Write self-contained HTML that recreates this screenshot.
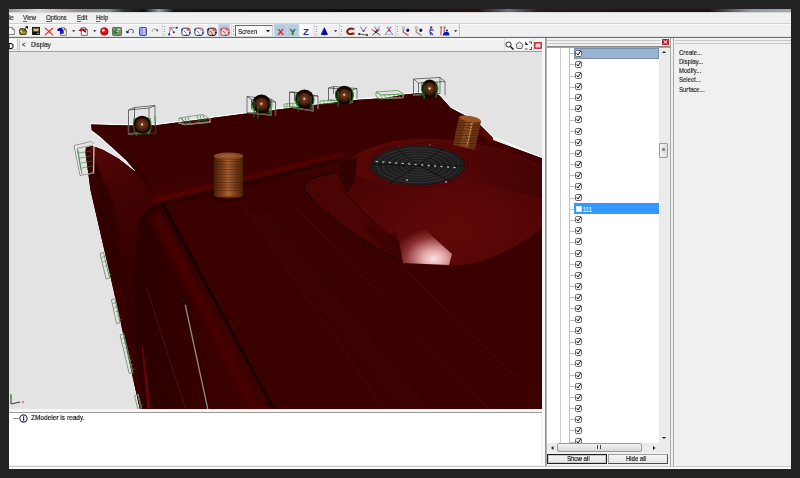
<!DOCTYPE html>
<html><head><meta charset="utf-8">
<style>
*{margin:0;padding:0;box-sizing:border-box}
html,body{width:800px;height:478px;overflow:hidden;background:#232323;font-family:"Liberation Sans",sans-serif;position:relative}
.a{position:absolute;display:block}
u{text-decoration-color:#666}
.t{position:absolute;font-size:8px;color:#2a2a2a;white-space:nowrap;line-height:8px;transform:scaleX(0.75);transform-origin:0 0;will-change:transform;-webkit-text-stroke:0.2px currentColor}
</style></head><body>
<div class="a" style="left:9px;top:9px;width:782px;height:460px;background:#f0f0f0"></div>
<div class="a" style="left:9px;top:9px;width:782px;height:3px;background:linear-gradient(90deg,#9a9a9a 0,#d8d8d8 30px,#b0a0a0 55px,#8a8a8a 75px,#7a9090 100px,#303030 115px,#101010 135px,#8aa0b0 150px,#151515 165px,#0d0d0d 380px,#2a1010 470px,#6a7080 500px,#2a1a1a 530px,#1e1010 700px,#8a9aa0 740px,#a0a8b0 782px)"></div>
<div class="a" style="left:9px;top:12px;width:782px;height:1px;background:#d8d8d8"></div>
<div class="t" style="left:9px;top:13.8px;">le</div>
<div class="t" style="left:23px;top:13.8px;"><u>V</u>iew</div>
<div class="t" style="left:46px;top:13.8px;"><u>O</u>ptions</div>
<div class="t" style="left:76.5px;top:13.8px;"><u>E</u>dit</div>
<div class="t" style="left:96px;top:13.8px;"><u>H</u>elp</div>
<div class="a" style="left:9px;top:23px;width:782px;height:1px;background:#d0d0d0"></div>
<div class="a" style="left:9px;top:24px;width:782px;height:1px;background:#fafafa"></div>
<div class="a" style="left:459px;top:24px;width:1px;height:13px;background:#c4c4c4"></div>
<div class="a" style="left:9px;top:36px;width:782px;height:1px;background:#e0e0e0"></div>
<div class="a" style="left:9px;top:37px;width:782px;height:1px;background:#6e6e6e"></div>
<svg class="a" style="left:9px;top:27px;" width="6" height="8" viewBox="0 0 6 8"><path d="M0,0.5 H3.2 L5.3,2.6 V7.5 H0" fill="#fff" stroke="#6a6a6a" stroke-width="0.9"/><path d="M3.2,0.5 V2.6 H5.3" fill="none" stroke="#6a6a6a" stroke-width="0.7"/></svg>
<svg class="a" style="left:19px;top:26px;" width="9" height="9" viewBox="0 0 9 9"><path d="M0.6,3.5 L1.6,2.6 H4.2 L5,3.4 H6.8 V8.3 H1 Z" fill="#8a8a18" stroke="#2a2a08" stroke-width="0.9"/><path d="M1.2,5 H7.8 L6.8,8.3 H1.2z" fill="#a8a828" stroke="#2a2a08" stroke-width="0.7"/><circle cx="2.3" cy="5.3" r="1.1" fill="#e8e890"/><path d="M5.2,3 L8.2,1 M8.6,0.6 L8.6,2.4 L6.8,0.8z" stroke="#111" stroke-width="0.9" fill="#111"/></svg>
<svg class="a" style="left:32px;top:26.5px;" width="8" height="8.5" viewBox="0 0 8 8.5"><rect x="0.4" y="0.4" width="7.2" height="7.7" fill="#151510" stroke="#101008" stroke-width="0.8"/><rect x="1.4" y="1" width="5.2" height="3.4" fill="#c8c878"/><rect x="1.4" y="1" width="5.2" height="1" fill="#6a6a30"/><rect x="5.3" y="5.8" width="1.3" height="1.3" fill="#e0e0d0"/></svg>
<svg class="a" style="left:44px;top:26.5px;" width="10" height="9" viewBox="0 0 10 9"><path d="M1,0.8 L9,8.2 M9,0.8 L1,8.2" stroke="#d42020" stroke-width="1.1"/></svg>
<svg class="a" style="left:57px;top:26.5px;" width="10" height="9" viewBox="0 0 10 9"><path d="M3.5,0.8 H7.3 L9.3,2.8 V8.3 H3.5z" fill="#fff" stroke="#5a5a5a" stroke-width="0.8"/><path d="M7.3,0.8 V2.8 H9.3" fill="none" stroke="#333" stroke-width="0.8"/><path d="M0.3,2.2 L2,1 H4.5 L6.5,3 V6.6 H3.3 V4 H0.6z" fill="#0a0ab8"/><rect x="3.3" y="4" width="3.2" height="2.6" fill="#1a1ae0"/></svg>
<svg class="a" style="left:71.5px;top:30px;" width="4" height="3" viewBox="0 0 4 3"><path d="M0.2,0.2 h3 l-1.5,1.8z" fill="#111"/></svg>
<svg class="a" style="left:93px;top:30px;" width="4" height="3" viewBox="0 0 4 3"><path d="M0.2,0.2 h3 l-1.5,1.8z" fill="#111"/></svg>
<svg class="a" style="left:78px;top:26.5px;" width="10" height="9" viewBox="0 0 10 9"><path d="M3.3,0.8 H7.3 L9.3,2.8 V8.3 H3.3z" fill="#fff" stroke="#4a4a4a" stroke-width="0.8"/><path d="M7.3,0.8 V2.8 H9.3" fill="none" stroke="#222" stroke-width="0.8"/><path d="M0.3,3.4 L3,1.2 L5.5,1.8 L7.5,3.2 L6.5,4.6 L4.8,3.4 L2.8,4.4 Z" fill="#d01010"/><path d="M5,2.6 L7.8,5.2" stroke="#500000" stroke-width="1.3"/></svg>
<svg class="a" style="left:100px;top:26.5px;" width="9" height="9" viewBox="0 0 9 9"><circle cx="4.3" cy="4.4" r="4" fill="#d01818"/><circle cx="4.3" cy="4.4" r="3.6" fill="none" stroke="#a00808" stroke-width="0.6"/><circle cx="3.4" cy="3.2" r="1.5" fill="#f8b0b0"/></svg>
<svg class="a" style="left:112px;top:26.5px;" width="10" height="9" viewBox="0 0 10 9"><rect x="0.5" y="0.5" width="9" height="8" rx="0.8" fill="#8a9078" stroke="#5a5a50" stroke-width="0.9"/><path d="M1.5,4.5 L4,1.8 L6,3 L5,6.5 L2.2,6.8z" fill="#108a10"/><rect x="5.5" y="1.6" width="2.6" height="1.4" fill="#a8d8e0"/><rect x="4.2" y="3.6" width="2.2" height="1.2" fill="#c0e0e8"/><rect x="5.5" y="6.2" width="3" height="1.2" fill="#8a8050"/></svg>
<svg class="a" style="left:126px;top:28px;" width="8" height="6" viewBox="0 0 8 6"><path d="M2,3.8 C2.5,0.8 6,0.4 7.2,2.6 C7.6,3.6 7.2,4.8 6.6,5.4" fill="none" stroke="#6a6a80" stroke-width="1.1"/><path d="M0.2,2.6 L3.4,4.2 L0.6,5.4z" fill="#10104a"/></svg>
<svg class="a" style="left:139px;top:26.5px;" width="8" height="9" viewBox="0 0 8 9"><rect x="0.5" y="0.5" width="7" height="8" rx="1" fill="#9a9af0" stroke="#404070" stroke-width="0.9"/><path d="M4.2,1.8 h1.6 M4.2,4 h1.6 M4.2,6.3 h1.6" stroke="#fff" stroke-width="1"/></svg>
<svg class="a" style="left:151px;top:28px;" width="8" height="6" viewBox="0 0 8 6"><path d="M1.2,3.8 C0.8,1.2 4,0.2 5.6,2" fill="none" stroke="#8a8a8a" stroke-width="0.9"/><path d="M5,1.2 L7.6,1.8 L6,4.2z" fill="#5a5a5a"/></svg>
<div class="a" style="left:162px;top:24px;width:1px;height:13px;background:#dadada"></div>
<div class="a" style="left:164px;top:26px;width:1px;height:9px;background:repeating-linear-gradient(#9a9a9a 0 1px,transparent 1px 2.7px)"></div>
<div class="a" style="left:231px;top:24px;width:1px;height:13px;background:#dadada"></div>
<div class="a" style="left:233px;top:26px;width:1px;height:9px;background:repeating-linear-gradient(#9a9a9a 0 1px,transparent 1px 2.7px)"></div>
<div class="a" style="left:314px;top:24px;width:1px;height:13px;background:#dadada"></div>
<div class="a" style="left:316px;top:26px;width:1px;height:9px;background:repeating-linear-gradient(#9a9a9a 0 1px,transparent 1px 2.7px)"></div>
<div class="a" style="left:339px;top:24px;width:1px;height:13px;background:#dadada"></div>
<div class="a" style="left:341px;top:26px;width:1px;height:9px;background:repeating-linear-gradient(#9a9a9a 0 1px,transparent 1px 2.7px)"></div>
<div class="a" style="left:395px;top:24px;width:1px;height:13px;background:#dadada"></div>
<div class="a" style="left:397px;top:26px;width:1px;height:9px;background:repeating-linear-gradient(#9a9a9a 0 1px,transparent 1px 2.7px)"></div>
<svg class="a" style="left:168px;top:26px;" width="10" height="10" viewBox="0 0 10 10"><path d="M2.5,1.8 L9,1.8 M2.5,1.8 L1.2,8.2 M2.5,1.8 L5.8,6" stroke="#5a6ab0" stroke-width="0.7" fill="none"/><path d="M2.5,2 L1.4,8" stroke="#a0a8c8" stroke-width="0.9"/><circle cx="2.6" cy="2" r="1.6" fill="#e88080"/><circle cx="8.8" cy="1.8" r="1" fill="#1a28a0"/><circle cx="1.2" cy="8.4" r="1.1" fill="#1a28a0"/><circle cx="5.8" cy="6.2" r="1" fill="#6a1010"/></svg>
<svg class="a" style="left:181px;top:26.5px;" width="10" height="9" viewBox="0 0 10 9"><rect x="0.8" y="1.2" width="8.2" height="7.2" rx="2" fill="#f8f8f8" stroke="#3a3a70" stroke-width="1"/><path d="M2.8,3.8 L5.4,6.2" stroke="#333" stroke-width="0.7"/><circle cx="7" cy="2.6" r="1.4" fill="#e05050"/><circle cx="1.2" cy="2.6" r="0.9" fill="#2030b0"/><circle cx="8.8" cy="5.8" r="0.9" fill="#2030b0"/><circle cx="5.6" cy="8.4" r="0.9" fill="#2030b0"/></svg>
<svg class="a" style="left:194px;top:26.5px;" width="10" height="9" viewBox="0 0 10 9"><rect x="0.8" y="1.2" width="8.2" height="7.2" rx="2" fill="#f8f8f8" stroke="#3a3a70" stroke-width="1"/><path d="M2.8,3.8 L5.4,6.2" stroke="#333" stroke-width="0.7"/><circle cx="7" cy="2.6" r="1.4" fill="#f0a0a0"/><circle cx="1.2" cy="2.6" r="0.9" fill="#2030b0"/><circle cx="8.8" cy="5.8" r="0.9" fill="#2030b0"/><circle cx="5.6" cy="8.4" r="0.9" fill="#2030b0"/></svg>
<div class="a" style="left:218px;top:24px;width:12px;height:13px;background:#b4cade;border:1px solid #c8d8e8"></div>
<svg class="a" style="left:207px;top:26.5px;" width="10" height="9" viewBox="0 0 10 9"><rect x="0.8" y="1.2" width="8.2" height="7.2" rx="2" fill="#f0c8c8" stroke="#202020" stroke-width="1"/><path d="M2.8,3.8 L5.4,6.2" stroke="#333" stroke-width="0.7"/><circle cx="7" cy="2.6" r="1.4" fill="#d05050"/><circle cx="1.2" cy="2.6" r="0.9" fill="#101010"/><circle cx="8.8" cy="5.8" r="0.9" fill="#101010"/><circle cx="5.6" cy="8.4" r="0.9" fill="#101010"/></svg>
<svg class="a" style="left:220px;top:26.5px;" width="10" height="9" viewBox="0 0 10 9"><rect x="0.8" y="1.2" width="8.2" height="7.2" rx="2" fill="#f4d0d0" stroke="#c05050" stroke-width="1"/><path d="M2.8,3.8 L5.4,6.2" stroke="#333" stroke-width="0.7"/><circle cx="7" cy="2.6" r="1.4" fill="#e07070"/><circle cx="1.2" cy="2.6" r="0.9" fill="#a03030"/><circle cx="8.8" cy="5.8" r="0.9" fill="#a03030"/><circle cx="5.6" cy="8.4" r="0.9" fill="#a03030"/></svg>
<div class="a" style="left:235px;top:25px;width:38px;height:12px;background:#fff;border:1px solid #6a6a6a;border-right-color:#d0d0d0;border-bottom-color:#d0d0d0"></div>
<div class="t" style="left:238px;top:27.5px;color:#1a1a1a">Screen</div>
<div class="a" style="left:264px;top:26px;width:8px;height:10px;background:#f4f4f4"></div>
<svg class="a" style="left:266px;top:30px;" width="5" height="3" viewBox="0 0 5 3"><path d="M0,0 h4 l-2,2.2z" fill="#111"/></svg>
<div class="a" style="left:274px;top:24px;width:13px;height:13px;background:#b4cade;border:1px solid #c0d2e4"></div>
<div class="a" style="left:287px;top:24px;width:12px;height:13px;background:#b4cade;border:1px solid #c0d2e4"></div>
<div class="a" style="left:300px;top:24px;width:12px;height:13px;background:#fafafa"></div>
<div class="a" style="left:277.5px;top:25.5px;font:bold 9.5px 'Liberation Sans',sans-serif;color:#d02020;line-height:11px">X</div>
<div class="a" style="left:289.5px;top:25.5px;font:bold 9.5px 'Liberation Sans',sans-serif;color:#107010;line-height:11px">Y</div>
<div class="a" style="left:303px;top:25.5px;font:bold 9.5px 'Liberation Sans',sans-serif;color:#2030c0;line-height:11px">Z</div>
<svg class="a" style="left:320px;top:26.5px;" width="9" height="9" viewBox="0 0 9 9"><path d="M4.5,0.3 L8,7.6 Q4.5,8.8 0.8,7.6z" fill="#0c0c90"/><path d="M4.3,0.8 L1.2,7.4" stroke="#3a50e0" stroke-width="1"/></svg>
<svg class="a" style="left:333.5px;top:30px;" width="4" height="3" viewBox="0 0 4 3"><path d="M0.2,0.2 h3 l-1.5,1.8z" fill="#111"/></svg>
<svg class="a" style="left:346px;top:26.5px;" width="9" height="9" viewBox="0 0 9 9"><path d="M8,2.4 C4.5,0.6 1,2.2 1.2,4.8 C1.4,7.2 4.5,7.6 8,6.2" fill="none" stroke="#901010" stroke-width="2"/><path d="M6.4,1.6 l2,0.6 M6.6,6.6 l2,-0.4" stroke="#606060" stroke-width="1.6"/></svg>
<svg class="a" style="left:358px;top:26px;" width="10" height="10" viewBox="0 0 10 10"><path d="M2.5,0.6 L5.5,5.6 L8.5,0.6" fill="none" stroke="#4a58c0" stroke-width="0.8"/><path d="M1,8 L9,9" stroke="#303030" stroke-width="0.8"/><circle cx="5.5" cy="5" r="1.1" fill="#c02040"/><circle cx="1.2" cy="8" r="1.1" fill="#4a1808"/><circle cx="9" cy="9" r="1" fill="#4a1808"/></svg>
<svg class="a" style="left:371px;top:26px;" width="10" height="10" viewBox="0 0 10 10"><path d="M3.5,0.6 L6,4.8 L8.5,0.6" fill="none" stroke="#4a58c0" stroke-width="0.8"/><path d="M0.6,3.4 L9.4,9.2 M1.2,9.2 L9,3.6" stroke="#303040" stroke-width="0.8"/><circle cx="6" cy="4.4" r="1.1" fill="#c02040"/><circle cx="4.8" cy="6" r="1" fill="#201010"/></svg>
<svg class="a" style="left:384px;top:26px;" width="10" height="10" viewBox="0 0 10 10"><path d="M2,2 h6 M2,8.6 h6" stroke="#b0b0b0" stroke-width="0.7"/><path d="M7,0.6 L1,9 M3,0.6 L9,9" stroke="#5a68c8" stroke-width="0.9"/><circle cx="5.2" cy="4.4" r="1.2" fill="#d03050"/></svg>
<svg class="a" style="left:401px;top:26px;" width="9" height="10" viewBox="0 0 9 10"><circle cx="2.5" cy="1.8" r="1.3" fill="none" stroke="#909090" stroke-width="0.7"/><path d="M2.6,3.2 L2.2,6 L6,8.6 L7.6,9" stroke="#c06a6a" stroke-width="1.5" fill="none"/><ellipse cx="6.8" cy="4.2" rx="1.5" ry="1.8" fill="#141a60"/><path d="M6.8,1.6 v1" stroke="#9aa0c0" stroke-width="0.8"/></svg>
<svg class="a" style="left:414px;top:26px;" width="9" height="10" viewBox="0 0 9 10"><circle cx="2.5" cy="1.8" r="1.3" fill="none" stroke="#c07a7a" stroke-width="0.7"/><path d="M2.6,3.2 L2.2,6 L6,8.6 L7.6,9" stroke="#9a9a9a" stroke-width="1.5" fill="none"/><ellipse cx="6.8" cy="4.2" rx="1.5" ry="1.8" fill="#141a60"/></svg>
<svg class="a" style="left:428px;top:26px;" width="8" height="10" viewBox="0 0 8 10"><circle cx="3.2" cy="1.4" r="1.1" fill="#2a30a0"/><path d="M3,2.4 L1.8,5.6 L2.8,9.4 M1.4,3.8 L5,4.2 M2.6,6.2 L5,9" stroke="#3a40c8" stroke-width="1.2" fill="none"/><path d="M4.8,2.6 L6,4.6" stroke="#c06060" stroke-width="0.9"/></svg>
<svg class="a" style="left:439px;top:26px;" width="11" height="10" viewBox="0 0 11 10"><circle cx="2.2" cy="1.6" r="1.3" fill="#c87878"/><circle cx="5.6" cy="1.6" r="1.3" fill="#c87878"/><path d="M2.2,2.8 L1.8,9.4 M5.6,2.8 L5.2,6" stroke="#c87878" stroke-width="1.5"/><path d="M3.6,9.6 Q4,5.6 7.6,5.8 Q10.6,6 10.4,9.6z" fill="#0c18b0"/><circle cx="8" cy="4.4" r="1" fill="#0c18b0"/></svg>
<svg class="a" style="left:454px;top:30px;" width="4" height="3" viewBox="0 0 4 3"><path d="M0.2,0.2 h3 l-1.5,1.8z" fill="#111"/></svg>
<div class="a" style="left:9px;top:38px;width:533px;height:14px;background:#f0f0f0"></div>
<div class="a" style="left:9px;top:39px;width:9px;height:11px;background:#fafafa;border-right:1px solid #c4c4c4;border-bottom:1px solid #d0d0d0"></div>
<div class="a" style="left:19px;top:39px;width:523px;height:12px;background:#f0f0f0;border-left:1px solid #c8c8c8;border-top:1px solid #fafafa"></div>
<div class="a" style="left:9px;top:39px;width:8px;height:11px;overflow:hidden"><div class="a" style="left:-1.5px;top:2.5px;font:bold 8.5px 'Liberation Sans',sans-serif;color:#101010;line-height:9px;will-change:transform;transform:scaleX(0.95);transform-origin:0 0">D</div></div>
<div class="t" style="left:22px;top:40.8px;">&lt;</div>
<div class="t" style="left:30.8px;top:40.8px;">Display</div>
<div class="a" style="left:504px;top:39px;width:29px;height:11px;background:#f8f8f8;border-left:1px solid #d8d8d8"></div>
<div class="a" style="left:533px;top:39px;width:9px;height:12px;background:#f4f4f4;border-left:1px solid #d8d8d8"></div>
<svg class="a" style="left:505px;top:41px;" width="9" height="9" viewBox="0 0 9 9"><circle cx="3.5" cy="3.5" r="2.6" fill="none" stroke="#222" stroke-width="1"/><path d="M5.5,5.5 L8.5,8.5" stroke="#111" stroke-width="1.5"/></svg>
<svg class="a" style="left:515px;top:41px;" width="9" height="9" viewBox="0 0 9 9"><path d="M4.5,1 L7.8,3.3 L6.8,7.5 L2.2,7.5 L1.2,3.3z" fill="#e8e8e8" stroke="#555" stroke-width="0.9"/></svg>
<svg class="a" style="left:524px;top:41px;" width="8" height="9" viewBox="0 0 8 9"><path d="M1,0.5 L4.5,4 L1.5,4z" fill="#222"/><path d="M5,1 h2.5 M7.5,1 v2 M1,8 h2.5 M7.5,6 v2.5 h-2" stroke="#333" stroke-width="0.9" fill="none"/></svg>
<svg class="a" style="left:534px;top:42px;" width="8" height="7" viewBox="0 0 8 7"><rect x="0.8" y="0.8" width="6.4" height="5.4" fill="#f8d0d0" stroke="#b02020" stroke-width="1.3"/></svg>
<div class="a" style="left:9px;top:51px;width:533px;height:1px;background:#a0a0a0"></div>
<div class="a" style="left:9px;top:52px;width:533px;height:357px;background:#e3e3e3;overflow:hidden">
<svg width="533" height="357" viewBox="9 52 533 357" style="position:absolute;left:0;top:0">
<defs>
  <linearGradient id="fender" x1="0" y1="0" x2="1" y2="0.3">
    <stop offset="0" stop-color="#560707"/>
    <stop offset="0.45" stop-color="#460303"/>
    <stop offset="1" stop-color="#3a0000"/>
  </linearGradient>
  <linearGradient id="turret" x1="0" y1="0" x2="0" y2="1">
    <stop offset="0" stop-color="#560606"/>
    <stop offset="0.5" stop-color="#4a0303"/>
    <stop offset="1" stop-color="#3e0101"/>
  </linearGradient>
  <linearGradient id="hl" x1="0" y1="0" x2="1" y2="1">
    <stop offset="0" stop-color="#b87070"/>
    <stop offset="0.55" stop-color="#f4c8c8"/>
    <stop offset="1" stop-color="#7a2020"/>
  </linearGradient>
  <linearGradient id="cyl" x1="0" y1="0" x2="1" y2="0">
    <stop offset="0" stop-color="#4a2008"/>
    <stop offset="0.25" stop-color="#7a3c16"/>
    <stop offset="0.5" stop-color="#a86232"/>
    <stop offset="0.75" stop-color="#7a3c16"/>
    <stop offset="1" stop-color="#4e2208"/>
  </linearGradient>
  <pattern id="stripes" width="4" height="2.6" patternUnits="userSpaceOnUse">
    <rect width="4" height="1" fill="#2a1004" fill-opacity="0.45"/>
  </pattern>
  <radialGradient id="ball" cx="0.5" cy="0.45" r="0.6">
    <stop offset="0" stop-color="#9a5a3a"/>
    <stop offset="0.3" stop-color="#6a3218"/>
    <stop offset="0.75" stop-color="#42190a"/>
    <stop offset="1" stop-color="#220a04"/>
  </radialGradient>
  <radialGradient id="vent" cx="0.5" cy="0.5" r="0.5">
    <stop offset="0" stop-color="#303030"/>
    <stop offset="1" stop-color="#1c1c1c"/>
  </radialGradient>
  <linearGradient id="spoil" gradientUnits="userSpaceOnUse" x1="250" y1="112" x2="262" y2="182">
    <stop offset="0" stop-color="#3a0000"/>
    <stop offset="0.7" stop-color="#3b0000"/>
    <stop offset="1" stop-color="#420101"/>
  </linearGradient>
  <filter id="blur1" x="-20%" y="-20%" width="140%" height="140%"><feGaussianBlur stdDeviation="1.2"/></filter>
  <filter id="blur2" x="-20%" y="-20%" width="140%" height="140%"><feGaussianBlur stdDeviation="2.5"/></filter>
</defs>
<!-- white halo of silhouette -->
<polyline fill="none" stroke="#ffffff" stroke-width="1.2" points="90,123.8 130,124.8 156,124.5 250,112.3 280,108.5 355,99.2 385,97.4 405,93.9 415,92.7 436,92.3 440,95.3 450.7,107.2 465,114.8 481,125.3 493,137.3 543,158 545,158.5"/>
<!-- body -->
<polygon fill="#3a0000" points="91,124.5 130,125.5 156,125.2 250,113 280,109.2 355,99.9 385,98.1 405,94.6 415,93.4 436,93 440,96 450.7,107.9 465,115.5 481,126 493,138 492.5,140 543,158.7 543,410 140,410 113.5,290 90.5,190 85.5,153 85.9,147.5 91.7,145.4 103.4,150 118.5,158.4 134.4,171 126,161 116,151.5 100,137 92,131"/>
<!-- spoiler surface gradient -->
<path d="M92,131 L91,124.5 L130,125.5 L156,125.2 L250,113 L280,109.2 L355,99.9 L385,98.1 L405,94.6 L415,93.4 L436,93 L440,96 L450.7,107.9 L465,115.5 L481,126 L493,138 L492.5,140 L543,158.7 L545,170 C505,148 462,140 421,140 C390,140 355,150 340,168 L152,199 L134.4,171 L126,161 L116,151.5 L100,137 Z" fill="url(#spoil)"/>
<!-- crescent halos -->
<path d="M92,131.3 L100,137.3 L116,151.8 L126,161.2 L134.4,171" fill="none" stroke="#ffffff" stroke-width="1.1"/>
<path d="M85.9,147 L91.7,144.9 L103.4,149.5 L118.5,157.9 L134.4,170.5" fill="none" stroke="#ffffff" stroke-width="1.1"/>
<!-- fender base -->
<path d="M85.9,147.5 L91.7,145.4 L103.4,150 L118.5,158.4 L134.4,171 L150,193 L161,202.6 L274,410 L140,410 L113.5,290 L90.5,190 L85.5,153 Z" fill="#360000"/>
<!-- fender top surface (right of shoulder) -->
<defs><linearGradient id="ftop" gradientUnits="userSpaceOnUse" x1="95" y1="150" x2="150" y2="260">
<stop offset="0" stop-color="#560707"/><stop offset="0.35" stop-color="#440303"/><stop offset="1" stop-color="#340000"/></linearGradient></defs>
<path d="M91.7,145.4 L103.4,150 L118.5,158.4 L134.4,171 L150,193 L161,202.6 C150,208 142,214 139,225 C136,250 134,280 136,320 C137,350 140,380 146,410 L142,410 C135,350 125,280 116.8,215 C110,190 100,170 89.2,151.7 Z" fill="url(#ftop)"/>
<!-- shoulder highlight curve -->
<path d="M89.2,151.7 C96,165 100,178 102,190 C108,215 125,280 135,350" fill="none" stroke="#2a0000" stroke-width="2" opacity="0.6" filter="url(#blur1)"/>
<!-- spoiler side lip band -->
<path d="M126.5,155 C135,165 143,178 150.3,190 C153,196 157,200 161,202.6" fill="none" stroke="#240000" stroke-width="1.4" filter="url(#blur1)"/><path d="M136,173 C142,182 148,192 158,201" fill="none" stroke="#520606" stroke-width="1.5" opacity="0.6" filter="url(#blur1)"/>
<!-- black scribbles on fender side -->
<g stroke="#1a0000" stroke-width="1" fill="none" opacity="0.7" filter="url(#blur1)">
<path d="M95,200 L112,230 M100,215 L108,250 M104,228 L118,260 M110,250 L116,285 M98,190 L106,205"/>
</g>
<!-- fender panel curve -->
<path d="M161,202.6 C150,208 142,214 139,225 C136,250 134,280 136,320 C137,350 140,380 146,410" fill="none" stroke="#220000" stroke-width="1.1"/>
<defs><linearGradient id="fpan" gradientUnits="userSpaceOnUse" x1="140" y1="0" x2="230" y2="0"><stop offset="0" stop-color="#2a0000"/><stop offset="1" stop-color="#3c0000"/></linearGradient></defs><path d="M139,225 C136,250 134,280 136,320 C137,350 140,380 146,410 L274,410 L161,202.6 C150,208 142,214 139,225 Z" fill="url(#fpan)" opacity="0.9"/>
<!-- lighter band left of black line -->
<path d="M158,208 L262,410 L250,410 L152,222 Z" fill="#460303" filter="url(#blur2)"/>
<!-- ridge band -->
<path d="M152,202 L343,155.5 L344,161 L156,208 Z" fill="#2c0000" filter="url(#blur1)"/>
<path d="M150,199.5 L343,152.5 L344,156 L154,203.5 Z" fill="#5a0606" filter="url(#blur1)"/>
<!-- roof black line -->
<path d="M162,202.5 L274,410" stroke="#100000" stroke-width="2.4"/>
<!-- faint diagonal lines on roof -->
<path d="M239,200 L385.5,410 M294,205 L490,410 M399,264 L541,401" stroke="#4c0303" stroke-width="1.6" opacity="0.8"/>
<path d="M266.8,205 L435.7,410 M353.5,232 L390,275" stroke="#240000" stroke-width="0.9" opacity="0.8"/>
<path d="M248,214 L400,410 L430,410 L270,214 Z" fill="#3e0101" opacity="0.6"/>
<!-- antenna -->
<path d="M146.5,288 L186,410" stroke="#3a2222" stroke-width="1" opacity="0.7"/>
<path d="M140,300 L172,410" stroke="#2a1414" stroke-width="0.8" opacity="0.5"/>
<path d="M184,299 L208,410" stroke="#8c8c8c" stroke-width="1.3"/>
<path d="M183.6,297 L185.4,305" stroke="#101010" stroke-width="2"/>
<path d="M141.5,345 L143,345 L151,410 L147.5,410 Z" fill="#700606" opacity="0.8"/>
<!-- right spoiler end lighter -->
<path d="M466,116 L481,126 L493,138 L491,142 L476,132 Z" fill="#560707"/>
<!-- turret -->
<defs>
  <radialGradient id="tur2" cx="0.62" cy="0.75" r="0.7">
    <stop offset="0" stop-color="#600808"/>
    <stop offset="0.6" stop-color="#520505"/>
    <stop offset="1" stop-color="#440202"/>
  </radialGradient>
  <linearGradient id="scoop" x1="0" y1="0" x2="1" y2="1">
    <stop offset="0" stop-color="#3e0101"/>
    <stop offset="0.6" stop-color="#4c0404"/>
    <stop offset="1" stop-color="#5a0707"/>
  </linearGradient>
  <radialGradient id="hl2" cx="0.68" cy="0.85" r="0.75">
    <stop offset="0" stop-color="#fbe4e4"/>
    <stop offset="0.3" stop-color="#e0a0a0"/>
    <stop offset="0.7" stop-color="#8a3030"/>
    <stop offset="1" stop-color="#5a0808"/>
  </radialGradient>
</defs>
<!-- scoop outer base -->
<path d="M303.5,188 C306,180 315,176 336.5,172.4 L345,165 C360,148 390,140 421,140 C462,140 505,148 545,170 L545,226 C515,250 480,266 449,266 L405.5,263 C345,236 315,205 303.5,188 Z" fill="url(#tur2)"/>
<defs><linearGradient id="ttop" gradientUnits="userSpaceOnUse" x1="360" y1="0" x2="545" y2="0"><stop offset="0" stop-color="#5a0707"/><stop offset="0.6" stop-color="#520606"/><stop offset="1" stop-color="#420202"/></linearGradient></defs><path d="M345,165 C360,148 390,140 421,140 C462,140 505,148 545,170 L545,200 C500,185 460,182 420,183 C380,184 352,178 345,165 Z" fill="url(#ttop)" opacity="0.9"/>
<path d="M343,167 C358,149 390,139.5 421,139.5 C462,139.5 505,147 545,169" fill="none" stroke="#5e0909" stroke-width="1.3" opacity="0.8"/>
<!-- scoop left band (between groove and inner ridge) -->
<path d="M303.5,188 C306,180 315,176 336.5,172.4 L342.8,188 C355,205 370,220 399.3,243 L405.5,263 C345,236 315,205 303.5,188 Z" fill="#4a0404"/>
<!-- broad lighter region -->
<defs><radialGradient id="glow"><stop offset="0" stop-color="#5e0808" stop-opacity="0.85"/><stop offset="1" stop-color="#5e0808" stop-opacity="0"/></radialGradient></defs><ellipse cx="460" cy="212" rx="75" ry="40" fill="url(#glow)"/>
<path d="M370,222 C378,232 388,240 396,232 L404,262 C385,252 375,240 365,228 Z" fill="#340000" opacity="0.6" filter="url(#blur1)"/>
<!-- groove outline -->
<path d="M336.5,172.4 C315,176 306,180 303.5,188 C315,205 345,235 405.5,262.5" fill="none" stroke="#180000" stroke-width="1.2"/>
<!-- turret side wall (ribbed, darker) -->
<path d="M339,168 C339,177 342,185 348,192 C353,186 356,176 357,158 C348,158 342,162 339,168 Z" fill="#2e0000"/>
<path d="M339.5,171 L356,162 M340,175 L355.5,167 M341,179 L355,172 M342.5,183 L354,177 M344.5,187 L352,182" stroke="#4e0909" stroke-width="0.6"/>
<!-- inner ridge line -->
<path d="M342.8,188 C355,205 370,220 399.3,243" fill="none" stroke="#260000" stroke-width="1"/>
<circle cx="308" cy="196" r="0.9" fill="#111"/><circle cx="350" cy="236" r="0.9" fill="#111"/><circle cx="404" cy="263" r="1" fill="#222"/>
<!-- highlight -->
<path d="M396,224 L422,227 L452,254 L449,265 L403,263 Z" fill="url(#hl2)"/>
<!-- vent rim -->
<ellipse cx="418" cy="165.4" rx="50" ry="22" fill="#3a0000"/>
<ellipse cx="418" cy="165.4" rx="48.5" ry="20.8" fill="none" stroke="#600a0a" stroke-width="1.2"/>
<ellipse cx="418" cy="165.4" rx="47" ry="19.6" fill="#1e1e1e"/>
<g fill="none" stroke="#383838" stroke-width="0.8">
<ellipse cx="418" cy="165.4" rx="5.9" ry="2.5"/><ellipse cx="418" cy="165.4" rx="11.8" ry="4.9"/><ellipse cx="418" cy="165.4" rx="17.6" ry="7.4"/><ellipse cx="418" cy="165.4" rx="23.5" ry="9.8"/><ellipse cx="418" cy="165.4" rx="29.4" ry="12.2"/><ellipse cx="418" cy="165.4" rx="35.2" ry="14.7"/><ellipse cx="418" cy="165.4" rx="41.1" ry="17.2"/></g>
<path d="M418,165.4 L395,147.5 M418,165.4 L445,147.5 M418,165.4 L390,183 M418,165.4 L452,182 M418,165.4 L465,166 M418,165.4 L371,164" stroke="#0e0e0e" stroke-width="0.8"/>
<path d="M375.7,161.4 L457.4,167.7" stroke="#c0c0c0" stroke-width="1.2" stroke-dasharray="2.2,4.3"/>
<circle cx="407" cy="180" r="0.9" fill="#aaa"/><circle cx="446" cy="182" r="0.9" fill="#aaa"/><circle cx="430" cy="145" r="0.8" fill="#666"/>
<!-- cylinder 1 -->
<rect x="214" y="156" width="29" height="39" fill="url(#cyl)"/>
<rect x="214" y="158" width="29" height="36" fill="url(#stripes)"/>
<ellipse cx="228.5" cy="195" rx="14.5" ry="3.5" fill="url(#cyl)"/>
<ellipse cx="228.5" cy="156" rx="14.5" ry="3.5" fill="#8a4a22"/><ellipse cx="228.5" cy="156" rx="8" ry="1.8" fill="#a8643a" opacity="0.7"/>
<ellipse cx="228.5" cy="199" rx="15" ry="2.5" fill="#200000" opacity="0.6"/>
<!-- cylinder 2 -->
<path d="M459,117 L481,121 L475,150 L453,145 Z" fill="#6e3412"/><path d="M466,119 L474,120.5 L468,148 L460,146.5 Z" fill="#8a4a1e"/>
<path d="M459,117 L481,121 L475,150 L453,145 Z" fill="url(#stripes)"/>
<ellipse cx="470" cy="119" rx="11" ry="3" transform="rotate(10 470 119)" fill="#9a5424"/>
<path d="M472,123 L467,146" stroke="#d8a070" stroke-width="1.1" stroke-dasharray="2,1.2"/>
<!-- balls & wireframes -->
<g fill="none" stroke-linejoin="round"><path d="M128.5,110 L149,108 L149,132 L128.5,134 Z M134.5,107.5 L155,105.5 L155,125.9 M128.5,110 L134.5,107.5 M149,108 L155,105.5 M134.5,107.5 L134.5,121.9" stroke="#ffffff" stroke-width="1.3" opacity="0.6"/><path d="M128.5,110 L149,108 L149,132 L128.5,134 Z M134.5,107.5 L155,105.5 L155,125.9 M128.5,110 L134.5,107.5 M149,108 L155,105.5 M134.5,107.5 L134.5,121.9" stroke="#2a302a" stroke-width="0.7"/>
</g>
<circle cx="142.2" cy="124.7" r="9" fill="#120402"/><circle cx="142.2" cy="125.0" r="7" fill="url(#ball)"/><circle cx="141.89999999999998" cy="124.5" r="0.9" fill="#fff0e0"/>
<g fill="none">
<path d="M134,118 C133,126 134,132 137,136 M150,118 C152,126 151,132 148,135" stroke="#1a8a1a" stroke-width="0.9"/>
<path d="M131,135 L156,133 L155,116" stroke="#2a6a2a" stroke-width="0.6"/>
<path d="M247,96.5 L271,99 L271,115 L247,112.5 Z M251.5,99.5 L275.5,102 L275.5,115.6 M247,96.5 L251.5,99.5 M271,99 L275.5,102 M251.5,99.5 L251.5,109.1" stroke="#ffffff" stroke-width="1.3" opacity="0.6"/><path d="M247,96.5 L271,99 L271,115 L247,112.5 Z M251.5,99.5 L275.5,102 L275.5,115.6 M247,96.5 L251.5,99.5 M271,99 L275.5,102 M251.5,99.5 L251.5,109.1" stroke="#2a302a" stroke-width="0.7"/>
</g>
<circle cx="261.5" cy="104" r="9.5" fill="#120402"/><circle cx="261.5" cy="104.3" r="6.8" fill="url(#ball)"/><circle cx="261.2" cy="103.8" r="0.9" fill="#fff0e0"/>
<g fill="none">
<path d="M254,100 L254,117 M258,106 L258,119 M270,101 L270,116 M252,99 C251,106 252,110 255,112 M271,99 C273,105 272,110 268,113" stroke="#1a8a1a" stroke-width="0.8"/>
<path d="M289.5,92 L313,96 L313,111 L289.5,107 Z M294.5,92 L318,96 L318,108.75 M289.5,92 L294.5,92 M313,96 L318,96 M294.5,92 L294.5,101.0" stroke="#ffffff" stroke-width="1.3" opacity="0.6"/><path d="M289.5,92 L313,96 L313,111 L289.5,107 Z M294.5,92 L318,96 L318,108.75 M289.5,92 L294.5,92 M313,96 L318,96 M294.5,92 L294.5,101.0" stroke="#2a302a" stroke-width="0.7"/>
</g>
<circle cx="304.5" cy="99" r="9.5" fill="#120402"/><circle cx="304.5" cy="99.3" r="6.8" fill="url(#ball)"/><circle cx="304.2" cy="98.8" r="0.9" fill="#fff0e0"/>
<g fill="none">
<path d="M298,95 L298,112 M311,96 L311,110 M296,94 C295,100 296,105 299,107 M313,95 C315,100 314,105 311,108" stroke="#1a8a1a" stroke-width="0.8"/>
<path d="M284,104 L296,103 L297,106.5 L284,107 Z M287,103.5 L287,107 M290,103.5 L290,107 M293,103.5 L293,107" stroke="#2a8a2a" stroke-width="0.6"/>
<path d="M328.5,88 L352,90 L352,102 L328.5,100 Z M333.5,86.5 L357,88.5 L357,98.7 M328.5,88 L333.5,86.5 M352,90 L357,88.5 M333.5,86.5 L333.5,93.7" stroke="#ffffff" stroke-width="1.3" opacity="0.6"/><path d="M328.5,88 L352,90 L352,102 L328.5,100 Z M333.5,86.5 L357,88.5 L357,98.7 M328.5,88 L333.5,86.5 M352,90 L357,88.5 M333.5,86.5 L333.5,93.7" stroke="#2a302a" stroke-width="0.7"/>
</g>
<circle cx="344.4" cy="95" r="9.3" fill="#120402"/><circle cx="344.4" cy="95.3" r="6.6" fill="url(#ball)"/><circle cx="344.09999999999997" cy="94.8" r="0.9" fill="#fff0e0"/>
<g fill="none">
<path d="M338,91 L338,107 M350,91 L350,104 M336,90 C335,96 336,101 339,103 M352,90 C354,96 353,101 350,104" stroke="#1a8a1a" stroke-width="0.8"/>
<path d="M320,101 L334,100 L335,103 L320,104 Z M324,100.5 L324,104 M328,100.5 L328,104 M331,100.5 L331,104" stroke="#2a8a2a" stroke-width="0.6"/>
<path d="M413.5,79 L440,77.5 L440,93.5 L413.5,95 Z M418.5,83 L445,81.5 L445,95.1 M413.5,79 L418.5,83 M440,77.5 L445,81.5 M418.5,83 L418.5,92.6" stroke="#ffffff" stroke-width="1.3" opacity="0.6"/><path d="M413.5,79 L440,77.5 L440,93.5 L413.5,95 Z M418.5,83 L445,81.5 L445,95.1 M413.5,79 L418.5,83 M440,77.5 L445,81.5 M418.5,83 L418.5,92.6" stroke="#2a302a" stroke-width="0.7"/>
</g>
<ellipse cx="429.6" cy="88.8" rx="8.3" ry="9.3" fill="#120402"/><ellipse cx="429.8" cy="89" rx="5.8" ry="6.8" fill="url(#ball)"/><circle cx="429.5" cy="88.6" r="1" fill="#fff4e8"/>
<g fill="none">
<path d="M424,83 L424,99 M436,83 L436,98 M422,82 C421,89 422,94 425,97 M437,82 C439,89 438,94 435,97" stroke="#1a8a1a" stroke-width="0.8"/>
<path d="M179,118 L203,114.5 L210,119 L210,122 L185,124.5 L179,123 Z" stroke="#ffffff" stroke-width="1.4" opacity="0.7"/>
<path d="M179,118 L203,114.5 L210,119 L210,122 L185,124.5 L179,123 Z M180,118 L186,122.5 L210,119" stroke="#404040" stroke-width="0.55"/>
<path d="M182,118 L184,124 M185,117.5 L187,123.5 M188,117 L190,123.5 M197,115.5 L199,122 M200,115 L202,121.5 M203,115 L205,121" stroke="#2a8a2a" stroke-width="0.7"/>
<path d="M376,92 L398,90.5 L403.5,94 L403,97.5 L380,98.5 L376,96.5 Z" stroke="#ffffff" stroke-width="1.4" opacity="0.6"/>
<path d="M376,92 L398,90.5 L403.5,94 L403,97.5 L380,98.5 L376,96.5 Z M376,92 L381,95 L403.5,94" stroke="#2a7a2a" stroke-width="0.7"/>
<path d="M380,95 L382,98 M384,94.5 L386,98 M389,94.5 L391,98 M394,94 L396,97.5 M398,94 L400,97.5" stroke="#30a030" stroke-width="0.7"/>
<path d="M74,145.5 L91,141.5 L94,144 L93.5,173 L80,175.5 L75,148 Z M74,145.5 L77,148.5 L93,145" stroke="#ffffff" stroke-width="1.4" opacity="0.7"/>
<path d="M74,145.5 L91,141.5 L94,144 M74,145.5 L80,175.5 L93.5,173 M77,148.5 L93,145 M77,148.5 L82,174" stroke="#404040" stroke-width="0.55"/>
<path d="M79,153 L91,151 M80,158 L91,156 M81,163 L92,161 M82,168 L92,166 M78,150 L81,170" stroke="#2a8a2a" stroke-width="0.6"/>
<path d="M100,253.5 L103.5,252.5 L109.6,278 L106.1,279 Z" stroke="#ffffff" stroke-width="1.3" opacity="0.6"/>
<path d="M100,253.5 L103.5,252.5 L109.6,278 L106.1,279 Z" stroke="#2a5a2a" stroke-width="0.6"/>
<path d="M101.6,257.4 l3.5,-0.8 M103.2,261.8 l3.5,-0.8 M104.8,266.2 l3.5,-0.8 M106.4,270.7 l3.5,-0.8 M108.0,275.1 l3.5,-0.8" stroke="#30902a" stroke-width="0.6"/>
<path d="M111.4,299.7 L114.9,298.7 L120,322.6 L116.5,323.6 Z" stroke="#ffffff" stroke-width="1.3" opacity="0.6"/>
<path d="M111.4,299.7 L114.9,298.7 L120,322.6 L116.5,323.6 Z" stroke="#2a5a2a" stroke-width="0.6"/>
<path d="M112.8,303.4 l3.5,-0.8 M114.3,307.5 l3.5,-0.8 M115.7,311.6 l3.5,-0.8 M117.1,315.8 l3.5,-0.8 M118.6,320.0 l3.5,-0.8" stroke="#30902a" stroke-width="0.6"/>
<path d="M120,335 L123.5,334 L132.7,372.5 L129.2,373.5 Z" stroke="#ffffff" stroke-width="1.3" opacity="0.6"/>
<path d="M120,335 L123.5,334 L132.7,372.5 L129.2,373.5 Z" stroke="#2a5a2a" stroke-width="0.6"/>
<path d="M121.4,338.9 l3.5,-0.8 M122.8,343.3 l3.5,-0.8 M124.2,347.7 l3.5,-0.8 M125.6,352.1 l3.5,-0.8 M127.1,356.4 l3.5,-0.8 M128.5,360.8 l3.5,-0.8 M129.9,365.2 l3.5,-0.8 M131.3,369.6 l3.5,-0.8" stroke="#30902a" stroke-width="0.6"/>
<path d="M134.5,395.8 L138.0,394.8 L141.6,409 L138.1,410 Z" stroke="#ffffff" stroke-width="1.3" opacity="0.6"/>
<path d="M134.5,395.8 L138.0,394.8 L141.6,409 L138.1,410 Z" stroke="#2a5a2a" stroke-width="0.6"/>
<path d="M136.9,400.4 l3.5,-0.8 M139.2,405.4 l3.5,-0.8" stroke="#30902a" stroke-width="0.6"/>
</g>
<!-- axis gizmo -->
<path d="M11,404 L11,396 M11,404 L20,402" stroke="#222" stroke-width="0.9"/>
<path d="M11,397 L11,394" stroke="#209020" stroke-width="1.2"/>
<path d="M22,401 L24,403 M24,401 L22,403" stroke="#e04040" stroke-width="0.6"/>

</svg></div>
<div class="a" style="left:9px;top:409px;width:533px;height:3px;background:#f6f6f6"></div>
<div class="a" style="left:9px;top:412px;width:533px;height:1px;background:#9a9a9a"></div>
<div class="a" style="left:9px;top:413px;width:532px;height:52px;background:#fff"></div>
<div class="a" style="left:13px;top:418px;width:6px;height:1px;background:#909090"></div>
<svg class="a" style="left:19px;top:414px;" width="9" height="9" viewBox="0 0 9 9"><circle cx="4.5" cy="4.5" r="3.6" fill="#fff" stroke="#303050" stroke-width="1.1"/><rect x="4" y="2.4" width="1.2" height="4.4" fill="#1a1ab0"/></svg>
<div class="t" style="left:31px;top:414.3px;transform:scaleX(0.815);color:#141414">ZModeler is ready.</div>
<div class="a" style="left:9px;top:465px;width:533px;height:4px;background:#f0f0f0"></div>
<div class="a" style="left:542px;top:38px;width:3px;height:431px;background:#f8f8f8"></div>
<div class="a" style="left:545px;top:38px;width:2px;height:431px;background:linear-gradient(90deg,#8a8a8a,#c0c0c0)"></div>
<div class="a" style="left:547px;top:40px;width:113px;height:1px;background:#c8c8c8"></div>
<div class="a" style="left:547px;top:43px;width:113px;height:1px;background:#c8c8c8"></div>
<svg class="a" style="left:662px;top:39px;" width="7" height="6" viewBox="0 0 7 6"><rect x="0" y="0" width="7" height="6" fill="#b02020"/><path d="M1.5,1.2 L5.5,4.8 M5.5,1.2 L1.5,4.8" stroke="#fff" stroke-width="1"/></svg>
<div class="a" style="left:547px;top:46px;width:123px;height:2px;background:linear-gradient(#7a7a7a,#b0b0b0)"></div>
<div class="a" style="left:547px;top:48px;width:112px;height:395px;background:#fff"></div>
<div class="a" style="left:659px;top:48px;width:11px;height:395px;background:#ebebeb"></div>
<div class="a" style="left:560px;top:48px;width:1px;height:395px;background:#d0d0d0"></div>
<div class="a" style="left:569px;top:48px;width:1px;height:395px;background:#c0c0c0"></div>
<div class="a" style="left:569px;top:53px;width:6px;height:1px;background:#c0c0c0"></div>
<div class="a" style="left:574px;top:48px;width:85px;height:11px;background:#98b4d0;border:1px solid #7890b0"></div>
<svg class="a" style="left:575px;top:49.90px" width="7" height="7" viewBox="0 0 7 7"><rect x="0.5" y="0.5" width="6" height="6" rx="1.2" fill="#f4f4f4" stroke="#5a5a5a" stroke-width="0.9"/><path d="M1.7,3.3 L3,5 L5.8,0.8" fill="none" stroke="#111" stroke-width="1"/></svg>
<div class="a" style="left:569px;top:64px;width:6px;height:1px;background:#c0c0c0"></div>
<svg class="a" style="left:575px;top:60.99px" width="7" height="7" viewBox="0 0 7 7"><rect x="0.5" y="0.5" width="6" height="6" rx="1.2" fill="#f4f4f4" stroke="#5a5a5a" stroke-width="0.9"/><path d="M1.7,3.3 L3,5 L5.8,0.8" fill="none" stroke="#111" stroke-width="1"/></svg>
<div class="a" style="left:569px;top:76px;width:6px;height:1px;background:#c0c0c0"></div>
<svg class="a" style="left:575px;top:72.08px" width="7" height="7" viewBox="0 0 7 7"><rect x="0.5" y="0.5" width="6" height="6" rx="1.2" fill="#f4f4f4" stroke="#5a5a5a" stroke-width="0.9"/><path d="M1.7,3.3 L3,5 L5.8,0.8" fill="none" stroke="#111" stroke-width="1"/></svg>
<div class="a" style="left:569px;top:87px;width:6px;height:1px;background:#c0c0c0"></div>
<svg class="a" style="left:575px;top:83.17px" width="7" height="7" viewBox="0 0 7 7"><rect x="0.5" y="0.5" width="6" height="6" rx="1.2" fill="#f4f4f4" stroke="#5a5a5a" stroke-width="0.9"/><path d="M1.7,3.3 L3,5 L5.8,0.8" fill="none" stroke="#111" stroke-width="1"/></svg>
<div class="a" style="left:569px;top:98px;width:6px;height:1px;background:#c0c0c0"></div>
<svg class="a" style="left:575px;top:94.26px" width="7" height="7" viewBox="0 0 7 7"><rect x="0.5" y="0.5" width="6" height="6" rx="1.2" fill="#f4f4f4" stroke="#5a5a5a" stroke-width="0.9"/><path d="M1.7,3.3 L3,5 L5.8,0.8" fill="none" stroke="#111" stroke-width="1"/></svg>
<div class="a" style="left:569px;top:109px;width:6px;height:1px;background:#c0c0c0"></div>
<svg class="a" style="left:575px;top:105.35px" width="7" height="7" viewBox="0 0 7 7"><rect x="0.5" y="0.5" width="6" height="6" rx="1.2" fill="#f4f4f4" stroke="#5a5a5a" stroke-width="0.9"/><path d="M1.7,3.3 L3,5 L5.8,0.8" fill="none" stroke="#111" stroke-width="1"/></svg>
<div class="a" style="left:569px;top:120px;width:6px;height:1px;background:#c0c0c0"></div>
<svg class="a" style="left:575px;top:116.44px" width="7" height="7" viewBox="0 0 7 7"><rect x="0.5" y="0.5" width="6" height="6" rx="1.2" fill="#f4f4f4" stroke="#5a5a5a" stroke-width="0.9"/><path d="M1.7,3.3 L3,5 L5.8,0.8" fill="none" stroke="#111" stroke-width="1"/></svg>
<div class="a" style="left:569px;top:131px;width:6px;height:1px;background:#c0c0c0"></div>
<svg class="a" style="left:575px;top:127.53px" width="7" height="7" viewBox="0 0 7 7"><rect x="0.5" y="0.5" width="6" height="6" rx="1.2" fill="#f4f4f4" stroke="#5a5a5a" stroke-width="0.9"/><path d="M1.7,3.3 L3,5 L5.8,0.8" fill="none" stroke="#111" stroke-width="1"/></svg>
<div class="a" style="left:569px;top:142px;width:6px;height:1px;background:#c0c0c0"></div>
<svg class="a" style="left:575px;top:138.62px" width="7" height="7" viewBox="0 0 7 7"><rect x="0.5" y="0.5" width="6" height="6" rx="1.2" fill="#f4f4f4" stroke="#5a5a5a" stroke-width="0.9"/><path d="M1.7,3.3 L3,5 L5.8,0.8" fill="none" stroke="#111" stroke-width="1"/></svg>
<div class="a" style="left:569px;top:153px;width:6px;height:1px;background:#c0c0c0"></div>
<svg class="a" style="left:575px;top:149.71px" width="7" height="7" viewBox="0 0 7 7"><rect x="0.5" y="0.5" width="6" height="6" rx="1.2" fill="#f4f4f4" stroke="#5a5a5a" stroke-width="0.9"/><path d="M1.7,3.3 L3,5 L5.8,0.8" fill="none" stroke="#111" stroke-width="1"/></svg>
<div class="a" style="left:569px;top:164px;width:6px;height:1px;background:#c0c0c0"></div>
<svg class="a" style="left:575px;top:160.80px" width="7" height="7" viewBox="0 0 7 7"><rect x="0.5" y="0.5" width="6" height="6" rx="1.2" fill="#f4f4f4" stroke="#5a5a5a" stroke-width="0.9"/><path d="M1.7,3.3 L3,5 L5.8,0.8" fill="none" stroke="#111" stroke-width="1"/></svg>
<div class="a" style="left:569px;top:175px;width:6px;height:1px;background:#c0c0c0"></div>
<svg class="a" style="left:575px;top:171.89px" width="7" height="7" viewBox="0 0 7 7"><rect x="0.5" y="0.5" width="6" height="6" rx="1.2" fill="#f4f4f4" stroke="#5a5a5a" stroke-width="0.9"/><path d="M1.7,3.3 L3,5 L5.8,0.8" fill="none" stroke="#111" stroke-width="1"/></svg>
<div class="a" style="left:569px;top:186px;width:6px;height:1px;background:#c0c0c0"></div>
<svg class="a" style="left:575px;top:182.98px" width="7" height="7" viewBox="0 0 7 7"><rect x="0.5" y="0.5" width="6" height="6" rx="1.2" fill="#f4f4f4" stroke="#5a5a5a" stroke-width="0.9"/><path d="M1.7,3.3 L3,5 L5.8,0.8" fill="none" stroke="#111" stroke-width="1"/></svg>
<div class="a" style="left:569px;top:198px;width:6px;height:1px;background:#c0c0c0"></div>
<svg class="a" style="left:575px;top:194.07px" width="7" height="7" viewBox="0 0 7 7"><rect x="0.5" y="0.5" width="6" height="6" rx="1.2" fill="#f4f4f4" stroke="#5a5a5a" stroke-width="0.9"/><path d="M1.7,3.3 L3,5 L5.8,0.8" fill="none" stroke="#111" stroke-width="1"/></svg>
<div class="a" style="left:569px;top:209px;width:6px;height:1px;background:#c0c0c0"></div>
<div class="a" style="left:574px;top:203px;width:85px;height:11px;background:#3399ff"></div>
<div class="a" style="left:576px;top:206px;width:6px;height:6px;background:#fff;border:1px solid #d8e8f8"></div>
<div class="t" style="left:583px;top:205.5px;color:#fff">111</div>
<div class="a" style="left:569px;top:220px;width:6px;height:1px;background:#c0c0c0"></div>
<svg class="a" style="left:575px;top:216.25px" width="7" height="7" viewBox="0 0 7 7"><rect x="0.5" y="0.5" width="6" height="6" rx="1.2" fill="#f4f4f4" stroke="#5a5a5a" stroke-width="0.9"/><path d="M1.7,3.3 L3,5 L5.8,0.8" fill="none" stroke="#111" stroke-width="1"/></svg>
<div class="a" style="left:569px;top:231px;width:6px;height:1px;background:#c0c0c0"></div>
<svg class="a" style="left:575px;top:227.34px" width="7" height="7" viewBox="0 0 7 7"><rect x="0.5" y="0.5" width="6" height="6" rx="1.2" fill="#f4f4f4" stroke="#5a5a5a" stroke-width="0.9"/><path d="M1.7,3.3 L3,5 L5.8,0.8" fill="none" stroke="#111" stroke-width="1"/></svg>
<div class="a" style="left:569px;top:242px;width:6px;height:1px;background:#c0c0c0"></div>
<svg class="a" style="left:575px;top:238.43px" width="7" height="7" viewBox="0 0 7 7"><rect x="0.5" y="0.5" width="6" height="6" rx="1.2" fill="#f4f4f4" stroke="#5a5a5a" stroke-width="0.9"/><path d="M1.7,3.3 L3,5 L5.8,0.8" fill="none" stroke="#111" stroke-width="1"/></svg>
<div class="a" style="left:569px;top:253px;width:6px;height:1px;background:#c0c0c0"></div>
<svg class="a" style="left:575px;top:249.52px" width="7" height="7" viewBox="0 0 7 7"><rect x="0.5" y="0.5" width="6" height="6" rx="1.2" fill="#f4f4f4" stroke="#5a5a5a" stroke-width="0.9"/><path d="M1.7,3.3 L3,5 L5.8,0.8" fill="none" stroke="#111" stroke-width="1"/></svg>
<div class="a" style="left:569px;top:264px;width:6px;height:1px;background:#c0c0c0"></div>
<svg class="a" style="left:575px;top:260.61px" width="7" height="7" viewBox="0 0 7 7"><rect x="0.5" y="0.5" width="6" height="6" rx="1.2" fill="#f4f4f4" stroke="#5a5a5a" stroke-width="0.9"/><path d="M1.7,3.3 L3,5 L5.8,0.8" fill="none" stroke="#111" stroke-width="1"/></svg>
<div class="a" style="left:569px;top:275px;width:6px;height:1px;background:#c0c0c0"></div>
<svg class="a" style="left:575px;top:271.70px" width="7" height="7" viewBox="0 0 7 7"><rect x="0.5" y="0.5" width="6" height="6" rx="1.2" fill="#f4f4f4" stroke="#5a5a5a" stroke-width="0.9"/><path d="M1.7,3.3 L3,5 L5.8,0.8" fill="none" stroke="#111" stroke-width="1"/></svg>
<div class="a" style="left:569px;top:286px;width:6px;height:1px;background:#c0c0c0"></div>
<svg class="a" style="left:575px;top:282.79px" width="7" height="7" viewBox="0 0 7 7"><rect x="0.5" y="0.5" width="6" height="6" rx="1.2" fill="#f4f4f4" stroke="#5a5a5a" stroke-width="0.9"/><path d="M1.7,3.3 L3,5 L5.8,0.8" fill="none" stroke="#111" stroke-width="1"/></svg>
<div class="a" style="left:569px;top:297px;width:6px;height:1px;background:#c0c0c0"></div>
<svg class="a" style="left:575px;top:293.88px" width="7" height="7" viewBox="0 0 7 7"><rect x="0.5" y="0.5" width="6" height="6" rx="1.2" fill="#f4f4f4" stroke="#5a5a5a" stroke-width="0.9"/><path d="M1.7,3.3 L3,5 L5.8,0.8" fill="none" stroke="#111" stroke-width="1"/></svg>
<div class="a" style="left:569px;top:308px;width:6px;height:1px;background:#c0c0c0"></div>
<svg class="a" style="left:575px;top:304.97px" width="7" height="7" viewBox="0 0 7 7"><rect x="0.5" y="0.5" width="6" height="6" rx="1.2" fill="#f4f4f4" stroke="#5a5a5a" stroke-width="0.9"/><path d="M1.7,3.3 L3,5 L5.8,0.8" fill="none" stroke="#111" stroke-width="1"/></svg>
<div class="a" style="left:569px;top:320px;width:6px;height:1px;background:#c0c0c0"></div>
<svg class="a" style="left:575px;top:316.06px" width="7" height="7" viewBox="0 0 7 7"><rect x="0.5" y="0.5" width="6" height="6" rx="1.2" fill="#f4f4f4" stroke="#5a5a5a" stroke-width="0.9"/><path d="M1.7,3.3 L3,5 L5.8,0.8" fill="none" stroke="#111" stroke-width="1"/></svg>
<div class="a" style="left:569px;top:331px;width:6px;height:1px;background:#c0c0c0"></div>
<svg class="a" style="left:575px;top:327.15px" width="7" height="7" viewBox="0 0 7 7"><rect x="0.5" y="0.5" width="6" height="6" rx="1.2" fill="#f4f4f4" stroke="#5a5a5a" stroke-width="0.9"/><path d="M1.7,3.3 L3,5 L5.8,0.8" fill="none" stroke="#111" stroke-width="1"/></svg>
<div class="a" style="left:569px;top:342px;width:6px;height:1px;background:#c0c0c0"></div>
<svg class="a" style="left:575px;top:338.24px" width="7" height="7" viewBox="0 0 7 7"><rect x="0.5" y="0.5" width="6" height="6" rx="1.2" fill="#f4f4f4" stroke="#5a5a5a" stroke-width="0.9"/><path d="M1.7,3.3 L3,5 L5.8,0.8" fill="none" stroke="#111" stroke-width="1"/></svg>
<div class="a" style="left:569px;top:353px;width:6px;height:1px;background:#c0c0c0"></div>
<svg class="a" style="left:575px;top:349.33px" width="7" height="7" viewBox="0 0 7 7"><rect x="0.5" y="0.5" width="6" height="6" rx="1.2" fill="#f4f4f4" stroke="#5a5a5a" stroke-width="0.9"/><path d="M1.7,3.3 L3,5 L5.8,0.8" fill="none" stroke="#111" stroke-width="1"/></svg>
<div class="a" style="left:569px;top:364px;width:6px;height:1px;background:#c0c0c0"></div>
<svg class="a" style="left:575px;top:360.42px" width="7" height="7" viewBox="0 0 7 7"><rect x="0.5" y="0.5" width="6" height="6" rx="1.2" fill="#f4f4f4" stroke="#5a5a5a" stroke-width="0.9"/><path d="M1.7,3.3 L3,5 L5.8,0.8" fill="none" stroke="#111" stroke-width="1"/></svg>
<div class="a" style="left:569px;top:375px;width:6px;height:1px;background:#c0c0c0"></div>
<svg class="a" style="left:575px;top:371.51px" width="7" height="7" viewBox="0 0 7 7"><rect x="0.5" y="0.5" width="6" height="6" rx="1.2" fill="#f4f4f4" stroke="#5a5a5a" stroke-width="0.9"/><path d="M1.7,3.3 L3,5 L5.8,0.8" fill="none" stroke="#111" stroke-width="1"/></svg>
<div class="a" style="left:569px;top:386px;width:6px;height:1px;background:#c0c0c0"></div>
<svg class="a" style="left:575px;top:382.60px" width="7" height="7" viewBox="0 0 7 7"><rect x="0.5" y="0.5" width="6" height="6" rx="1.2" fill="#f4f4f4" stroke="#5a5a5a" stroke-width="0.9"/><path d="M1.7,3.3 L3,5 L5.8,0.8" fill="none" stroke="#111" stroke-width="1"/></svg>
<div class="a" style="left:569px;top:397px;width:6px;height:1px;background:#c0c0c0"></div>
<svg class="a" style="left:575px;top:393.69px" width="7" height="7" viewBox="0 0 7 7"><rect x="0.5" y="0.5" width="6" height="6" rx="1.2" fill="#f4f4f4" stroke="#5a5a5a" stroke-width="0.9"/><path d="M1.7,3.3 L3,5 L5.8,0.8" fill="none" stroke="#111" stroke-width="1"/></svg>
<div class="a" style="left:569px;top:408px;width:6px;height:1px;background:#c0c0c0"></div>
<svg class="a" style="left:575px;top:404.78px" width="7" height="7" viewBox="0 0 7 7"><rect x="0.5" y="0.5" width="6" height="6" rx="1.2" fill="#f4f4f4" stroke="#5a5a5a" stroke-width="0.9"/><path d="M1.7,3.3 L3,5 L5.8,0.8" fill="none" stroke="#111" stroke-width="1"/></svg>
<div class="a" style="left:569px;top:419px;width:6px;height:1px;background:#c0c0c0"></div>
<svg class="a" style="left:575px;top:415.87px" width="7" height="7" viewBox="0 0 7 7"><rect x="0.5" y="0.5" width="6" height="6" rx="1.2" fill="#f4f4f4" stroke="#5a5a5a" stroke-width="0.9"/><path d="M1.7,3.3 L3,5 L5.8,0.8" fill="none" stroke="#111" stroke-width="1"/></svg>
<div class="a" style="left:569px;top:430px;width:6px;height:1px;background:#c0c0c0"></div>
<svg class="a" style="left:575px;top:426.96px" width="7" height="7" viewBox="0 0 7 7"><rect x="0.5" y="0.5" width="6" height="6" rx="1.2" fill="#f4f4f4" stroke="#5a5a5a" stroke-width="0.9"/><path d="M1.7,3.3 L3,5 L5.8,0.8" fill="none" stroke="#111" stroke-width="1"/></svg>
<div class="a" style="left:569px;top:442px;width:6px;height:1px;background:#c0c0c0"></div>
<svg class="a" style="left:575px;top:438.05px" width="7" height="7" viewBox="0 0 7 7"><rect x="0.5" y="0.5" width="6" height="6" rx="1.2" fill="#f4f4f4" stroke="#5a5a5a" stroke-width="0.9"/><path d="M1.7,3.3 L3,5 L5.8,0.8" fill="none" stroke="#111" stroke-width="1"/></svg>
<div class="a" style="left:547px;top:443px;width:123px;height:9px;background:#ebebeb"></div>
<svg class="a" style="left:662px;top:51px;" width="4" height="3" viewBox="0 0 4 3"><path d="M0,2 L2,0 L4,2z" fill="#222"/></svg>
<svg class="a" style="left:662px;top:437px;" width="4" height="3" viewBox="0 0 4 3"><path d="M0,0 L2,2 L4,0z" fill="#222"/></svg>
<div class="a" style="left:659px;top:143px;width:9px;height:15px;background:linear-gradient(90deg,#f4f4f4,#dcdcdc);border:1px solid #9a9a9a;border-radius:1px"></div>
<div class="a" style="left:662px;top:148px;width:3px;height:3px;background:#888"></div>
<svg class="a" style="left:551px;top:446px;" width="3" height="4" viewBox="0 0 3 4"><path d="M2.5,0 L0,2 L2.5,4z" fill="#222"/></svg>
<svg class="a" style="left:653px;top:446px;" width="3" height="4" viewBox="0 0 3 4"><path d="M0,0 L2.5,2 L0,4z" fill="#222"/></svg>
<div class="a" style="left:557px;top:443px;width:85px;height:9px;background:linear-gradient(#f4f4f4,#d8d8d8);border:1px solid #9a9a9a;border-radius:2px"></div>
<div class="a" style="left:597px;top:445px;width:5px;height:4px;background:repeating-linear-gradient(90deg,#444 0 0.8px,transparent 0.8px 1.6px)"></div>
<div class="a" style="left:547px;top:452px;width:123px;height:13px;background:#f0f0f0"></div>
<div class="a" style="left:547px;top:454px;width:60px;height:10px;background:linear-gradient(#f6f6f6,#e4e4e4);border:1px solid #202020;box-shadow:inset 0 0 0 1px #c8c8c8"></div>
<div class="a" style="left:608px;top:454px;width:60px;height:10px;background:linear-gradient(#f6f6f6,#e4e4e4);border:1px solid #a0a0a0;border-right-color:#505050;border-bottom-color:#505050"></div>
<div class="t" style="left:566.5px;top:455px;color:#111">Show all</div>
<div class="t" style="left:626px;top:455px;color:#111">Hide all</div>
<div class="a" style="left:670px;top:38px;width:1px;height:431px;background:#a8a8a8"></div>
<div class="a" style="left:673px;top:38px;width:1px;height:431px;background:#a8a8a8"></div>
<div class="a" style="left:675px;top:40px;width:116px;height:1px;background:#c8c8c8"></div>
<div class="a" style="left:675px;top:43px;width:116px;height:1px;background:#c8c8c8"></div>
<div class="t" style="left:679px;top:48.5px;">Create...</div>
<div class="t" style="left:679px;top:57.8px;">Display...</div>
<div class="t" style="left:679px;top:67.1px;">Modify...</div>
<div class="t" style="left:679px;top:76.4px;">Select...</div>
<div class="t" style="left:679px;top:85.7px;">Surface...</div>
<div class="a" style="left:9px;top:466px;width:782px;height:1px;background:#c8c8c8"></div>
<div class="a" style="left:9px;top:467px;width:782px;height:2px;background:#fafafa"></div>
</body></html>
